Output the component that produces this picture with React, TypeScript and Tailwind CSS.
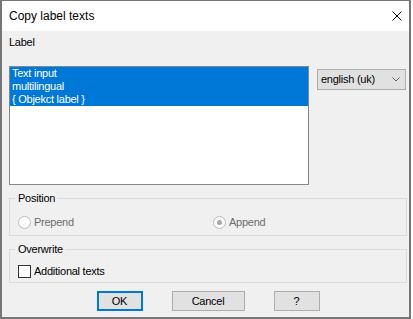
const font = { fontFamily: '"Liberation Sans", Arial, sans-serif' };

function Radio({ label, checked }: { label: string; checked?: boolean }) {
  return (
    <div className="flex items-center h-[13px]">
      <span className="w-[13px] h-[13px] rounded-full border border-[#bcbcbc] bg-[#fcfcfc] flex items-center justify-center">
        {checked && <span className="w-[5px] h-[5px] rounded-full bg-[#a8a8a8]" />}
      </span>
      <span className="ml-[3px] text-[#6d6d6d]">{label}</span>
    </div>
  );
}

export default function App() {
  return (
    <div className="w-[413px] h-[319px] bg-white">
      <div
        className="w-[411px] h-[319px] flex flex-col border-l-2 border-r-2 border-b-2 border-t border-[#767676] text-[11px] leading-[13px] tracking-[-0.25px] text-black"
        style={font}
      >
        {/* title bar */}
        <div className="h-[30px] bg-white flex items-center justify-between pl-[7px] pr-[7px]">
          <span className="text-[12px] tracking-normal">Copy label texts</span>
          <svg width="10" height="10" viewBox="0 0 10 10" className="mb-[1px]">
            <path d="M0.5 0.5 L9.5 9.5 M9.5 0.5 L0.5 9.5" stroke="#000" strokeWidth="1" />
          </svg>
        </div>

        <div className="flex-1 bg-[#f0f0f0] pl-[7px] pr-[2px]">
          <p className="pt-[5px]">Label</p>

          <div className="flex mt-[17px]">
            <div className="w-[300px] h-[119px] border border-[#828790] bg-white">
              {["Text input", "multilingual", "{ Objekct label }"].map((t) => (
                <div key={t} className="h-[13px] bg-[#0078d7] text-white pl-[2px]">
                  {t}
                </div>
              ))}
            </div>
            <div className="ml-[8px] mt-[3px] w-[89px] h-[21px] border border-[#adadad] bg-[#e1e1e1] flex items-center justify-between pl-[3px] pr-[5px]">
              <span>english (uk)</span>
              <svg width="8" height="5" viewBox="0 0 8 5">
                <path d="M0.5 0.5 L4 4 L7.5 0.5" fill="none" stroke="#606060" strokeWidth="1" />
              </svg>
            </div>
          </div>

          <fieldset className="mt-[7px] w-[398px] border border-[#dcdcdc] pb-[6px]">
            <legend className="ml-[5px] pl-[3px] pr-[2px]">Position</legend>
            <div className="flex mt-[11px] pl-[8px]">
              <div className="w-[195px]">
                <Radio label="Prepend" />
              </div>
              <Radio label="Append" checked />
            </div>
          </fieldset>

          <fieldset className="mt-[7px] w-[398px] border border-[#dcdcdc] pb-[4px]">
            <legend className="ml-[5px] pl-[3px] pr-[2px]">Overwrite</legend>
            <div className="flex items-center h-[13px] mt-[9px] pl-[8px]">
              <span className="w-[13px] h-[13px] border border-[#333333] bg-white" />
              <span className="ml-[3px]">Additional texts</span>
            </div>
          </fieldset>

          <div className="w-[398px] mt-[8px] flex justify-center gap-[29px]">
            <button className="w-[46px] h-[20px] border-2 border-[#0078d7] bg-[#e1e1e1] leading-[13px]">
              OK
            </button>
            <button className="w-[73px] h-[20px] border border-[#adadad] bg-[#e1e1e1] leading-[13px]">
              Cancel
            </button>
            <button className="w-[46px] h-[20px] border border-[#adadad] bg-[#e1e1e1] leading-[13px]">
              ?
            </button>
          </div>
        </div>
      </div>
    </div>
  );
}
